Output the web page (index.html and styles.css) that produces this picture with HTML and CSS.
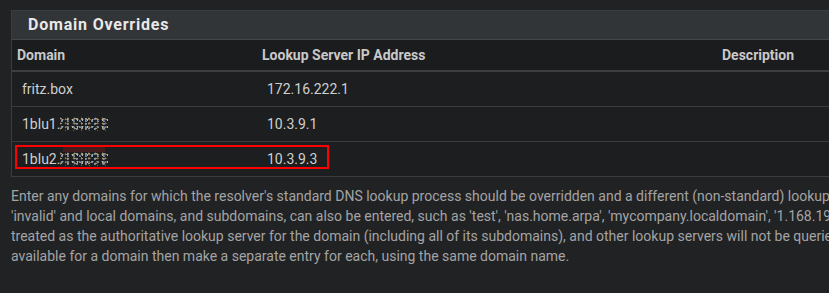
FILE: index.html
```html
<!DOCTYPE html>
<html lang="en">

<head>
    <meta charset="UTF-8">
    <meta name="viewport" content="width=device-width, initial-scale=1.0">
    <title>DNS Resolver - Domain Overrides</title>
    <link rel="stylesheet" href="styles.css">
</head>

<body>
    <div class="page">
        <div class="panel">
            <div class="panel-heading">
                <h2 class="panel-title">Domain Overrides</h2>
            </div>
            <table class="table">
                <colgroup>
                    <col class="col-domain">
                    <col class="col-ip">
                    <col class="col-descr">
                </colgroup>
                <thead>
                    <tr>
                        <th>Domain</th>
                        <th>Lookup Server IP Address</th>
                        <th>Description</th>
                    </tr>
                </thead>
                <tbody>
                    <tr>
                        <td>fritz.box</td>
                        <td>172.16.222.1</td>
                        <td></td>
                    </tr>
                    <tr>
                        <td>1blu1.<span class="masked"></span></td>
                        <td>10.3.9.1</td>
                        <td></td>
                    </tr>
                    <tr class="marked">
                        <td>1blu2.<span class="masked masked-red"></span></td>
                        <td>10.3.9.3</td>
                        <td></td>
                    </tr>
                </tbody>
            </table>
        </div>

        <p class="help-text">
            Enter any domains for which the resolver's standard DNS lookup process should be overridden and a different (non-standard) lookup server should be queried instead. Non-standard,<br>
            'invalid' and local domains, and subdomains, can also be entered, such as 'test', 'nas.home.arpa', 'mycompany.localdomain', '1.168.192.in-addr.arpa', or 'somesite.com'. The IP address is<br>
            treated as the authoritative lookup server for the domain (including all of its subdomains), and other lookup servers will not be queried. If there are multiple authoritative DNS servers<br>
            available for a domain then make a separate entry for each, using the same domain name.
        </p>
    </div>
</body>

</html>
```

FILE: styles.css
```css
body {
    margin: 0;
    background-color: #212224;
    font-family: Roboto, "Liberation Sans", sans-serif;
    overflow: hidden;
}

.page {
    width: 1300px;
    padding: 10px 0 0 11px;
}

.panel {
    border: 1px solid #3a3d40;
    background-color: #1c1e1f;
}

.panel-heading {
    background-color: #323538;
    border-bottom: 1px solid #44474a;
    height: 28px;
    padding-left: 16px;
}

.panel-title {
    margin: 0;
    font-size: 16px;
    font-weight: bold;
    letter-spacing: 0.8px;
    line-height: 28px;
    color: #e8e8e8;
}

.table {
    width: 100%;
    border-collapse: collapse;
    table-layout: fixed;
}

.col-domain {
    width: 245px;
}

.col-ip {
    width: 460px;
}

.table th {
    height: 30px;
    padding: 0 0 0 5px;
    text-align: left;
    font-size: 14px;
    font-weight: bold;
    color: #c9c9c9;
    background-color: #1b1c1e;
    border-bottom: 2px solid #3c3f42;
}

.table td {
    height: 34px;
    padding: 0 0 0 10px;
    font-size: 14px;
    color: #cfcfcf;
    border-top: 1px solid #3a3d40;
}

.table thead + tbody tr:first-child td {
    border-top: none;
}

.marked td {
    position: relative;
}

.marked td:first-child::after {
    content: "";
    position: absolute;
    left: 3px;
    top: 3px;
    width: 310px;
    height: 20px;
    border: 2px solid #ff0000;
    pointer-events: none;
}

.masked {
    display: inline-block;
    width: 48px;
    height: 14px;
    vertical-align: -2px;
    background-image:
        radial-gradient(circle at 12% 30%, #d9b98a 0.8px, transparent 1.2px),
        radial-gradient(circle at 30% 70%, #8fb2d0 0.8px, transparent 1.2px),
        radial-gradient(circle at 50% 40%, #f0e6d0 0.8px, transparent 1.2px),
        radial-gradient(circle at 70% 60%, #c48a4e 0.8px, transparent 1.2px),
        radial-gradient(circle at 88% 35%, #a9c4dd 0.8px, transparent 1.2px);
    background-size: 7px 5px, 6px 6px, 5px 7px, 8px 4px, 9px 5px;
    opacity: 0.75;
}

.masked-red {
    box-shadow: 0 -8px 0 -3px rgba(200, 30, 30, 0.3);
}

.help-text {
    margin: 9px 0 0;
    font-size: 14px;
    line-height: 20px;
    color: #a4a4a4;
    white-space: nowrap;
}
```
